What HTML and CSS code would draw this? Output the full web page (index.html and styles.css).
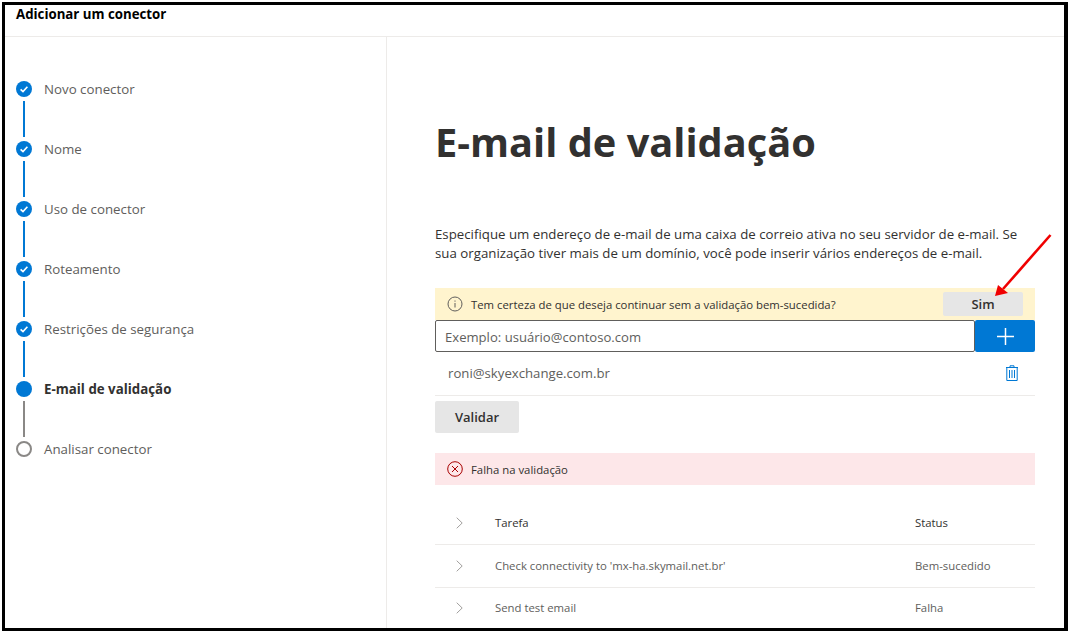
FILE: index.html
```html
<!DOCTYPE html>
<html lang="pt-BR">
<head>
<meta charset="utf-8">
<title>Adicionar um conector</title>
<link rel="stylesheet" href="styles.css">
</head>
<body>
<div class="frame">
  <header class="top">Adicionar um conector</header>
  <div class="panes">
    <nav class="side">
      <div class="step done"><svg class="dot" viewBox="0 0 16 16"><circle cx="8" cy="8" r="8" fill="#0078d4"/><path d="M4.6 8.3l2.4 2.3 4.4-4.8" fill="none" stroke="#fff" stroke-width="1.6"/></svg><span>Novo conector</span></div>
      <div class="link blue"></div>
      <div class="step done"><svg class="dot" viewBox="0 0 16 16"><circle cx="8" cy="8" r="8" fill="#0078d4"/><path d="M4.6 8.3l2.4 2.3 4.4-4.8" fill="none" stroke="#fff" stroke-width="1.6"/></svg><span>Nome</span></div>
      <div class="link blue"></div>
      <div class="step done"><svg class="dot" viewBox="0 0 16 16"><circle cx="8" cy="8" r="8" fill="#0078d4"/><path d="M4.6 8.3l2.4 2.3 4.4-4.8" fill="none" stroke="#fff" stroke-width="1.6"/></svg><span>Uso de conector</span></div>
      <div class="link blue"></div>
      <div class="step done"><svg class="dot" viewBox="0 0 16 16"><circle cx="8" cy="8" r="8" fill="#0078d4"/><path d="M4.6 8.3l2.4 2.3 4.4-4.8" fill="none" stroke="#fff" stroke-width="1.6"/></svg><span>Roteamento</span></div>
      <div class="link blue"></div>
      <div class="step done"><svg class="dot" viewBox="0 0 16 16"><circle cx="8" cy="8" r="8" fill="#0078d4"/><path d="M4.6 8.3l2.4 2.3 4.4-4.8" fill="none" stroke="#fff" stroke-width="1.6"/></svg><span>Restrições de segurança</span></div>
      <div class="link blue"></div>
      <div class="step current"><svg class="dot" viewBox="0 0 16 16"><circle cx="8" cy="8" r="8" fill="#0078d4"/></svg><span>E-mail de validação</span></div>
      <div class="link gray"></div>
      <div class="step"><svg class="dot" viewBox="0 0 16 16"><circle cx="8" cy="8" r="7" fill="#fff" stroke="#8a8886" stroke-width="2"/></svg><span>Analisar conector</span></div>
    </nav>
    <main class="main">
      <h1 class="title">E-mail de validação</h1>
      <p class="desc">Especifique um endereço de e-mail de uma caixa de correio ativa no seu servidor de e-mail. Se sua organização tiver mais de um domínio, você pode inserir vários endereços de e-mail.</p>
      <div class="bar warn">
        <svg class="bar-icon" viewBox="0 0 16 16"><circle cx="8" cy="8" r="7" fill="none" stroke="#605e5c" stroke-width="1"/><path d="M8 7v4.5M8 4.5v1.2" stroke="#605e5c" stroke-width="1" fill="none"/></svg>
        <span class="bar-text">Tem certeza de que deseja continuar sem a validação bem-sucedida?</span>
        <button class="btn sim">Sim</button>
      </div>
      <div class="entry">
        <div class="input">Exemplo: usuário@contoso.com</div>
        <button class="add" aria-label="Adicionar"><svg viewBox="0 0 16 16" width="17" height="17"><path d="M8 0v16M0 8h16" stroke="#fff" stroke-width="1.4" fill="none"/></svg></button>
      </div>
      <div class="addr">
        <span>roni@skyexchange.com.br</span>
        <svg class="trash" viewBox="0 0 12 16"><path d="M4 2.500V.8h4v1.700M0 2.500h12M.8 2.500V15.500h10.400V2.500" fill="none" stroke="#0078d4" stroke-width="1"/><path d="M3.500 5v8M6 5v8M8.500 5v8" stroke="#0078d4" stroke-width="1" fill="none"/></svg>
      </div>
      <button class="btn validar">Validar</button>
      <div class="bar fail">
        <svg class="bar-icon" viewBox="0 0 16 16"><circle cx="8" cy="8" r="7.300" fill="none" stroke="#a80000" stroke-width="1"/><path d="M5 5l6 6M11 5l-6 6" stroke="#a80000" stroke-width="1" fill="none"/></svg>
        <span class="bar-text">Falha na validação</span>
      </div>
      <div class="table">
        <div class="row head">
          <svg class="chev" viewBox="0 0 7 12"><path d="M.7.7l5.500 5.300-5.500 5.300" fill="none" stroke="#a19f9d" stroke-width="1"/></svg>
          <span class="c-task">Tarefa</span><span class="c-status">Status</span>
        </div>
        <div class="row">
          <svg class="chev" viewBox="0 0 7 12"><path d="M.7.7l5.500 5.300-5.500 5.300" fill="none" stroke="#a19f9d" stroke-width="1"/></svg>
          <span class="c-task">Check connectivity to 'mx-ha.skymail.net.br'</span><span class="c-status">Bem-sucedido</span>
        </div>
        <div class="row last">
          <svg class="chev" viewBox="0 0 7 12"><path d="M.7.7l5.500 5.300-5.500 5.300" fill="none" stroke="#a19f9d" stroke-width="1"/></svg>
          <span class="c-task">Send test email</span><span class="c-status">Falha</span>
        </div>
      </div>
    </main>
  </div>
  <svg class="arrow" viewBox="0 0 60 66"><path d="M58.500 3L11 57" stroke="#f00000" stroke-width="2.600" fill="none"/><path d="M3 64L6 53l10 8z" fill="#f00000"/></svg>
</div>
</body>
</html>
```
FILE: styles.css
```css
* { box-sizing: border-box; }
html, body { margin: 0; height: 100%; background: #fff; overflow: hidden; }
body { padding: 2px 2px 1px 2px; font-family: "Open Sans", "Noto Sans", sans-serif; color: #323130; }
.frame { position: relative; height: 629px; border: 3px solid #000; border-right-width: 4px; background: #fff; overflow: hidden; display: flex; flex-direction: column; }
.top { flex: none; height: 32px; padding: 1px 0 0 11px; font-size: 13.250px; line-height: 17px; font-weight: 700; color: #000; border-bottom: 1px solid #edebe9; }
.panes { flex: 1; display: flex; min-height: 0; }
.side { flex: none; width: 382px; border-right: 1px solid #edebe9; padding: 44px 0 0 11px; display: flex; flex-direction: column; }
.step { display: flex; align-items: center; height: 16px; font-size: 13.300px; color: #605e5c; }
.step span { margin-left: 12px; line-height: 16px; white-space: nowrap; }
.current { font-weight: 700; color: #323130; }
.dot { width: 16px; height: 16px; flex: none; }
.link { width: 2px; height: 36px; margin: 4px 0 4px 7px; }
.blue { background: #0078d4; }
.gray { background: #8a8886; }
.main { flex: 1; min-width: 0; padding: 0 0 0 48px; overflow: hidden; }
.title { margin: 80px 0 0; font-size: 39.750px; line-height: 50px; font-weight: 700; color: #323130; white-space: nowrap; }
.desc { width: 600px; margin: 58px 0 0; font-size: 13.280px; line-height: 19px; color: #323130; }
.bar { width: 600px; height: 32px; display: flex; align-items: center; padding-left: 12px; font-size: 11.350px; color: #323130; }
.warn { margin-top: 25px; background: #fff4ce; padding-right: 12px; }
.fail { margin-top: 20px; background: #fde7e9; }
.bar-icon { width: 16px; height: 16px; flex: none; margin-right: 8px; }
.bar-text { flex: 1; white-space: nowrap; }
.btn { border: 0; border-radius: 2px; background: #e6e6e6; color: #323130; font-family: inherit; font-weight: 600; font-size: 13px; padding: 0; }
.sim { width: 80px; height: 24px; margin-top: 0; }
.entry { display: flex; width: 600px; height: 32px; }
.input { width: 540px; height: 32px; border: 1px solid #605e5c; border-radius: 2px; padding: 0 9px; font-size: 13.100px; line-height: 32px; color: #605e5c; }
.add { width: 60px; height: 32px; border: 0; border-radius: 2px; background: #0078d4; display: flex; align-items: center; justify-content: center; padding: 0; }
.addr { width: 600px; height: 44px; display: flex; align-items: center; justify-content: space-between; padding: 0 17px 1px 13px; font-size: 13.200px; color: #605e5c; border-bottom: 1px solid #edebe9; }
.trash { width: 12px; height: 16px; flex: none; }
.validar { display: block; width: 84px; height: 32px; margin-top: 5px; }
.table { width: 600px; margin-top: 16px; }
.row { display: flex; align-items: center; height: 43px; padding-bottom: 1px; font-size: 11.350px; color: #605e5c; border-bottom: 1px solid #edebe9; }
.head { height: 44px; color: #323130; font-weight: 500; padding-bottom: 0; }
.chev { width: 7px; height: 12px; flex: none; margin-left: 21px; }
.c-task { width: 420px; margin-left: 32px; white-space: nowrap; }
.last { height: 40px; border-bottom: 0; }
.arrow { position: absolute; left: 987px; top: 227px; width: 60px; height: 66px; pointer-events: none; }
```
